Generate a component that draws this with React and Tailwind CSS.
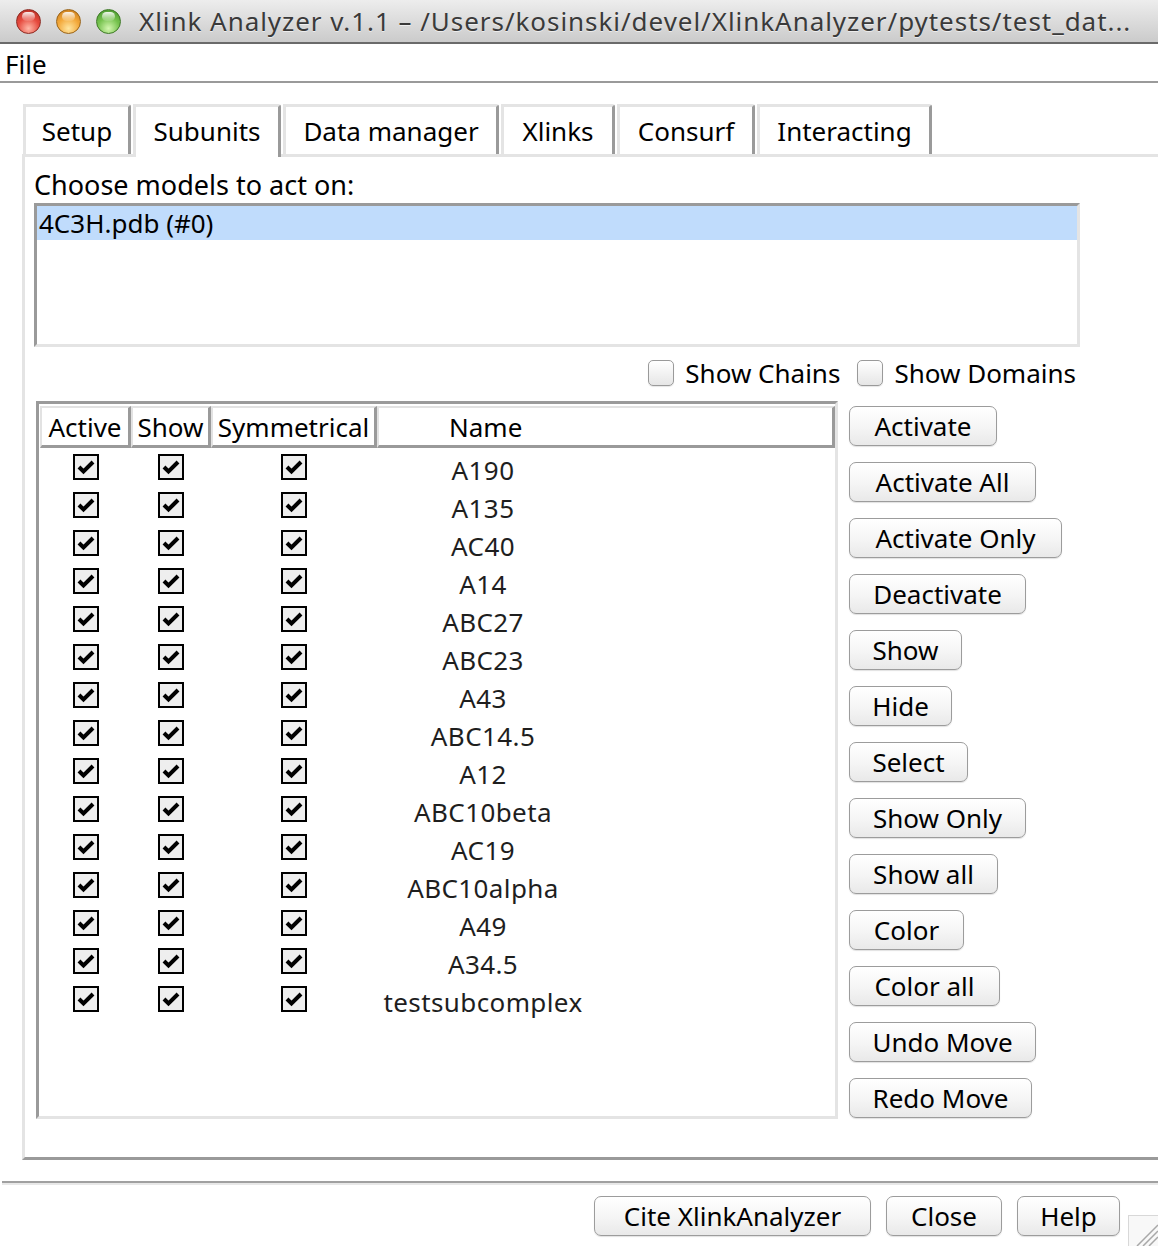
import React from 'react';

const names = [
  'A190', 'A135', 'AC40', 'A14', 'ABC27', 'ABC23', 'A43', 'ABC14.5',
  'A12', 'ABC10beta', 'AC19', 'ABC10alpha', 'A49', 'A34.5', 'testsubcomplex',
];

const sideButtons = [
  ['Activate', 'w-[148px]'],
  ['Activate All', 'w-[187px]'],
  ['Activate Only', 'w-[213px]'],
  ['Deactivate', 'w-[177px]'],
  ['Show', 'w-[113px]'],
  ['Hide', 'w-[103px]'],
  ['Select', 'w-[119px]'],
  ['Show Only', 'w-[177px]'],
  ['Show all', 'w-[149px]'],
  ['Color', 'w-[115px]'],
  ['Color all', 'w-[151px]'],
  ['Undo Move', 'w-[187px]'],
  ['Redo Move', 'w-[183px]'],
];

const tabs = [
  ['Setup', 'w-[108px]'],
  ['Subunits', 'w-[148px]'],
  ['Data manager', 'w-[216px]'],
  ['Xlinks', 'w-[114px]'],
  ['Consurf', 'w-[138px]'],
  ['Interacting', 'w-[175px]'],
];

const AquaButton = ({ label, className = '' }) => (
  <div
    className={`flex h-[40px] items-center justify-center rounded-[7px] border border-[#9c9c9c] bg-gradient-to-b from-white via-[#f6f6f6] to-[#e9e9e9] text-[26px] leading-[38px] text-black shadow-[0_1px_1px_rgba(0,0,0,0.12)] ${className}`}
  >
    {label}
  </div>
);

const CheckBox = () => (
  <div className="flex h-[26px] w-[26px] items-center justify-center border-2 border-black bg-[#eeeeee]">
    <svg width="18" height="16" viewBox="0 0 18 16">
      <path d="M2 8 L6.5 12.5 L16 3" fill="none" stroke="#000" strokeWidth="4" strokeLinejoin="miter" />
    </svg>
  </div>
);

const AquaCheck = () => (
  <div className="h-[26px] w-[26px] rounded-[5px] border border-[#9a9a9a] bg-gradient-to-b from-white to-[#e6e6e6] shadow-[0_1px_1px_rgba(0,0,0,0.1)]" />
);

const Light = ({ color }) => {
  const styles = {
    red: 'bg-[radial-gradient(circle_at_50%_80%,#ffb8a8_0%,#e64a3e_50%,#b02a20_100%)] border-[#8e2a22]',
    orange: 'bg-[radial-gradient(circle_at_50%_80%,#ffe6a0_0%,#f3a83a_50%,#c07418_100%)] border-[#9a6418]',
    green: 'bg-[radial-gradient(circle_at_50%_80%,#d4f7b0_0%,#76c24e_50%,#3f8f28_100%)] border-[#3e7a26]',
  };
  return (
    <div className={`relative h-[25px] w-[25px] rounded-full border ${styles[color]}`}>
      <div className="absolute left-[5px] top-[2px] h-[9px] w-[13px] rounded-full bg-gradient-to-b from-white/90 to-white/10" />
    </div>
  );
};

export default function App() {
  return (
    <div className="relative h-[1246px] w-[1158px] overflow-hidden bg-white font-['Noto_Sans',sans-serif] text-black">
      {/* Title bar */}
      <div className="flex h-[44px] items-center border-b-2 border-[#6a6a6a] bg-gradient-to-b from-[#ededed] to-[#cbcbcb] pl-[16px]">
        <div className="flex gap-[15px]">
          <Light color="red" />
          <Light color="orange" />
          <Light color="green" />
        </div>
        <div className="ml-[18px] whitespace-nowrap text-[26px] leading-[32px] tracking-[0.95px] text-[#3a3a3a] [text-shadow:0_1px_0_rgba(255,255,255,0.6)]">
          Xlink Analyzer v.1.1 – /Users/kosinski/devel/XlinkAnalyzer/pytests/test_dat...
        </div>
      </div>

      {/* Menu */}
      <div className="flex h-[39px] items-center border-b-2 border-[#9a9a9a] pl-[5px] pt-[2px] text-[26px] leading-[32px]">
        File
      </div>

      {/* Notebook */}
      <div className="pl-[22px] pt-[21px]">
        <div className="flex w-[1150px] items-end gap-[2px] border-b-[3px] border-[#e4e4e4] pl-[1px]">
          {tabs.map(([label, w]) => {
            const selected = label === 'Subunits';
            return (
              <div
                key={label}
                className={`flex h-[50px] items-center justify-center rounded-tr-[3px] border-l-[3px] border-r-[3px] border-t-[3px] border-l-[#e4e4e4] border-r-[#9a9a9a] border-t-[#e4e4e4] bg-white text-[26px] leading-[32px] ${w} ${selected ? 'relative z-10 -mb-[3px] h-[53px] pb-[3px]' : ''}`}
              >
                {label}
              </div>
            );
          })}
        </div>

        <div className="h-[1003px] w-[1150px] border-b-[3px] border-l-[3px] border-b-[#9a9a9a] border-l-[#e4e4e4] pl-[9px] pt-[12px]">
          <div className="text-[27px] leading-[32px]">Choose models to act on:</div>

          {/* Model list */}
          <div className="mt-[2px] h-[144px] w-[1046px] border-[3px] border-b-[#e4e4e4] border-l-[#9a9a9a] border-r-[#e4e4e4] border-t-[#9a9a9a] bg-white">
            <div className="h-[34px] bg-[#c0dcfc] pl-[2px] text-[26px] leading-[34px]">4C3H.pdb (#0)</div>
          </div>

          {/* Show toggles */}
          <div className="mt-[12px] flex h-[28px] w-[1046px] items-center justify-end pr-[4px] text-[26px] leading-[28px]">
            <AquaCheck />
            <span className="ml-[11px]">Show Chains</span>
            <div className="ml-[17px]">
              <AquaCheck />
            </div>
            <span className="ml-[11px]">Show Domains</span>
          </div>

          <div className="mt-[14px] flex items-start pl-[2px]">
            {/* Subunits table */}
            <div className="h-[718px] w-[802px] border-[3px] border-b-[#e4e4e4] border-l-[#9a9a9a] border-r-[#e4e4e4] border-t-[#9a9a9a] pl-[1px] pt-[2px]">
              <div className="flex text-[26px] leading-[32px]">
                {[
                  ['Active', 'w-[91px] justify-center'],
                  ['Show', 'w-[80px] justify-center'],
                  ['Symmetrical', 'w-[166px] justify-center'],
                  ['Name', 'w-[458px] pl-[70px]'],
                ].map(([label, cls]) => (
                  <div
                    key={label}
                    className={`flex h-[42px] items-center border-b-[3px] border-l-2 border-r-[3px] border-t-2 border-b-[#9a9a9a] border-l-[#e2e2e2] border-r-[#9a9a9a] border-t-[#e2e2e2] ${cls}`}
                  >
                    {label}
                  </div>
                ))}
              </div>
              {names.map((name) => (
                <div key={name} className="flex h-[38px] items-center">
                  <div className="flex w-[91px] justify-center">
                    <CheckBox />
                  </div>
                  <div className="flex w-[80px] justify-center">
                    <CheckBox />
                  </div>
                  <div className="flex w-[166px] justify-center">
                    <CheckBox />
                  </div>
                  <div className="w-[212px] pt-[6px] text-center text-[26px] leading-[32px] tracking-[0.4px] text-[#1e1e1e]">
                    {name}
                  </div>
                </div>
              ))}
            </div>

            {/* Action buttons */}
            <div className="ml-[11px] mt-[5px] flex flex-col gap-[16px]">
              {sideButtons.map(([label, w]) => (
                <AquaButton key={label} label={label} className={w} />
              ))}
            </div>
          </div>
        </div>
      </div>

      {/* Bottom bar */}
      <div className="ml-[2px] mt-[21px] border-t-2 border-[#a0a0a0]">
        <div className="h-[2px] bg-[#e8e8e8]" />
        <div className="flex justify-end gap-[15px] pr-[38px] pt-[11px]">
          <AquaButton label="Cite XlinkAnalyzer" className="w-[277px]" />
          <AquaButton label="Close" className="w-[116px]" />
          <AquaButton label="Help" className="w-[103px]" />
        </div>
      </div>

      {/* Resize grip */}
      <div className="absolute bottom-0 right-0 h-[31px] w-[30px] border-l border-t border-[#d8d8d8] bg-[#f8f8f8]">
        <svg width="30" height="31" viewBox="0 0 30 31">
          <path d="M8 30 L29 9 M14 30 L29 15 M20 30 L29 21" stroke="#a8a8a8" strokeWidth="1.5" />
        </svg>
      </div>
    </div>
  );
}
